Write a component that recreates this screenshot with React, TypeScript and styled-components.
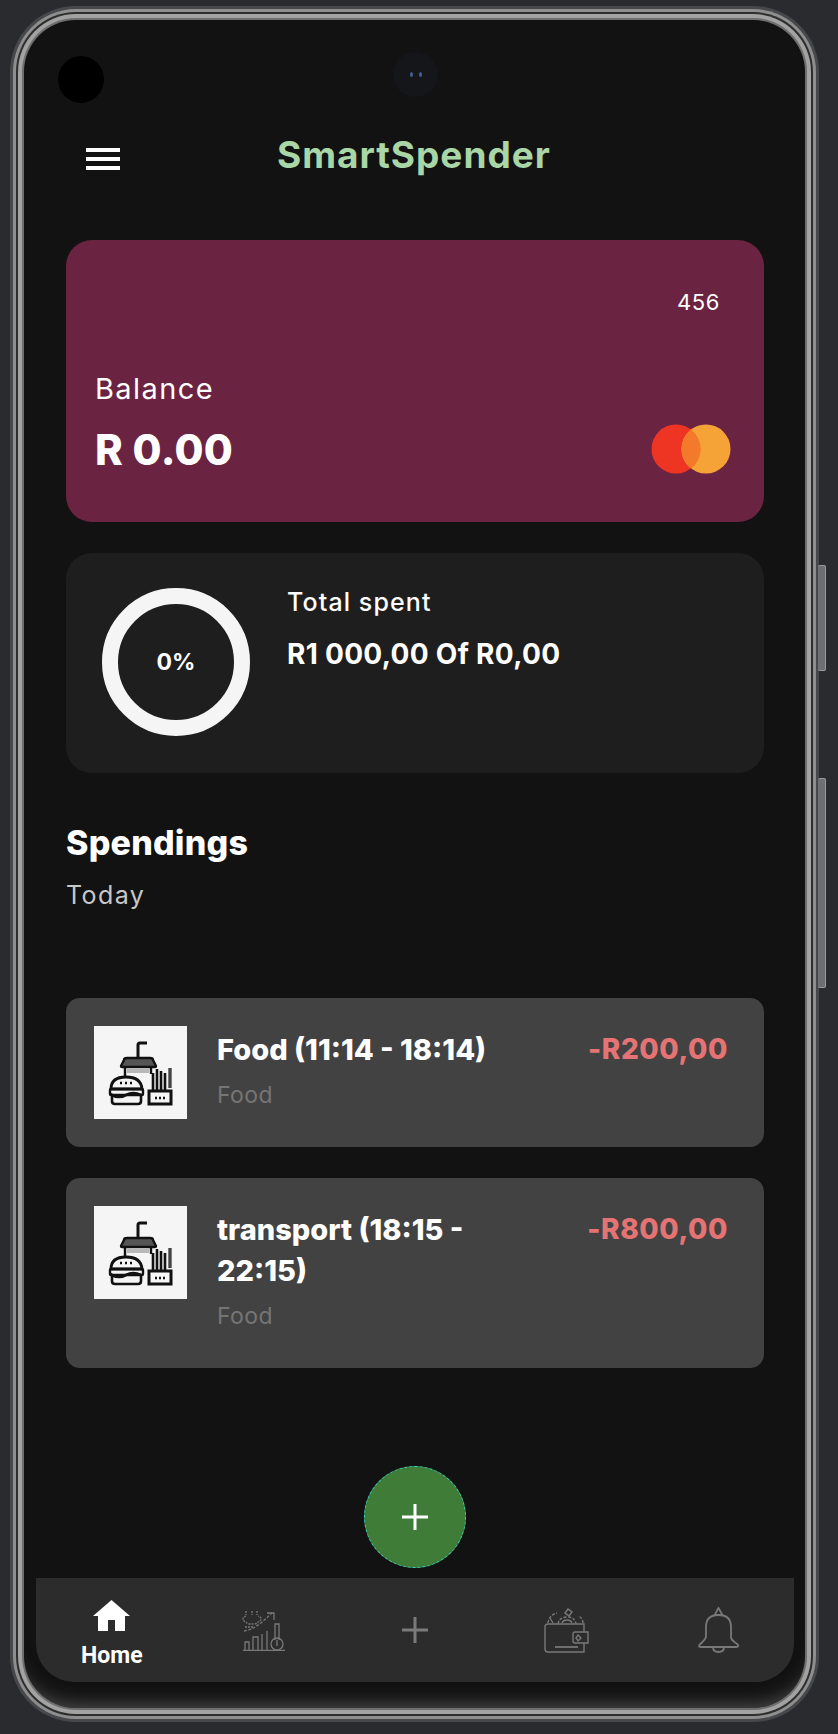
import React from "react";
import styled, { createGlobalStyle } from "styled-components";

const Global = createGlobalStyle`
  html, body { margin: 0; padding: 0; background: #2a2b2e; }
  * { box-sizing: border-box; }
  #root { width: 838px; height: 1734px; overflow: hidden; }
`;

const Page = styled.div`
  width: 838px;
  height: 1734px;
  padding: 20px 33px 26px 24px;
  background: #2a2b2e;
  font-family: Inter, "Noto Sans", sans-serif;
  color: #fff;
`;

const Phone = styled.div`
  position: relative;
  height: 100%;
  border-radius: 52px;
  background: #121212;
  display: flex;
  flex-direction: column;
  box-shadow:
    inset 0 -22px 18px -18px #4a4a4a,
    0 0 0 2px #6e6e6e,
    0 0 0 6px #a2a2a2,
    0 0 0 8px #2e2e2e,
    0 0 0 11px #8e8e8e,
    0 0 0 14px #47484b;
`;

const SideKey = styled.div<{ $top: number; $height: number }>`
  position: absolute;
  right: -21px;
  top: ${(p) => p.$top}px;
  width: 8px;
  height: ${(p) => p.$height}px;
  border-radius: 2px;
  background: #6e6f71;
  border: 1px solid #9a9a9a;
  border-left: none;
`;

const PunchHole = styled.div`
  position: absolute;
  left: 34px;
  top: 36px;
  width: 46px;
  height: 47px;
  border-radius: 50%;
  background: #000;
`;

const FrontCamera = styled.div`
  position: absolute;
  left: 369px;
  top: 32px;
  width: 45px;
  height: 45px;
  border-radius: 50%;
  background: #15161a;
  display: flex;
  align-items: center;
  justify-content: center;
  gap: 6px;
`;

const Lens = styled.span`
  width: 3px;
  height: 5px;
  border-radius: 50%;
  background: #3f5f96;
`;

const Content = styled.main`
  padding: 0 41px 0 42px;
  display: flex;
  flex-direction: column;
`;

const Header = styled.header`
  height: 220px;
  display: flex;
  align-items: flex-start;
  padding-top: 128px;
`;

const MenuBars = styled.div`
  width: 34px;
  height: 22px;
  margin-left: 20px;
  flex: none;
  display: flex;
  flex-direction: column;
  justify-content: space-between;
  span { display: block; height: 4px; background: #fff; }
`;

const Brand = styled.h1`
  margin: -13px 0 0 157px;
  font-size: 37px;
  line-height: 40px;
  font-weight: 700;
  color: #a9d6a6;
  letter-spacing: 1px;
`;

const BalanceCard = styled.section`
  height: 282px;
  border-radius: 26px;
  background: #6b2342;
  padding: 48px 33px 0 29px;
  display: flex;
  flex-direction: column;
`;

const CardNumber = styled.div`
  align-self: flex-end;
  margin-right: 11px;
  font-size: 22px;
  line-height: 28px;
  letter-spacing: 0.6px;
`;

const BalanceLabel = styled.div`
  margin-top: 55px;
  font-size: 29px;
  line-height: 36px;
  letter-spacing: 1.4px;
`;

const BalanceRow = styled.div`
  margin-top: 18px;
  display: flex;
  align-items: center;
  justify-content: space-between;
`;

const BalanceValue = styled.div`
  font-size: 42px;
  line-height: 50px;
  font-weight: 800;
  letter-spacing: 0.3px;
`;

const CardLogo = styled.svg`
  width: 80px;
  height: 50px;
  display: block;
  margin-top: -2px;
`;

const SpentCard = styled.section`
  margin-top: 31px;
  height: 220px;
  border-radius: 26px;
  background: #1e1e1e;
  padding: 35px 36px;
  display: flex;
  gap: 37px;
`;

const Ring = styled.div`
  width: 148px;
  height: 148px;
  flex: none;
  border-radius: 50%;
  border: 16px solid #f5f5f5;
  display: flex;
  align-items: center;
  justify-content: center;
  font-size: 23px;
  font-weight: 700;
`;

const SpentInfo = styled.div`
  display: flex;
  flex-direction: column;
`;

const SpentLabel = styled.div`
  margin-top: -3px;
  font-size: 25px;
  line-height: 34px;
  font-weight: 500;
  letter-spacing: 1.1px;
`;

const SpentValue = styled.div`
  margin-top: 18px;
  font-size: 28px;
  line-height: 34px;
  font-weight: 700;
  letter-spacing: 0.3px;
`;

const SectionTitle = styled.h2`
  margin: 50px 0 0;
  font-size: 34px;
  line-height: 40px;
  font-weight: 800;
  letter-spacing: 0.2px;
`;

const SectionSub = styled.div`
  margin-top: 15px;
  font-size: 25px;
  line-height: 34px;
  color: #c8c8c8;
  letter-spacing: 1.4px;
`;

const List = styled.div`
  margin-top: 86px;
  display: flex;
  flex-direction: column;
  gap: 31px;
`;

const Item = styled.article<{ $height: number }>`
  height: ${(p) => p.$height}px;
  border-radius: 14px;
  background: #424242;
  padding: 28px 36px 0 28px;
  display: flex;
`;

const Thumb = styled.div`
  width: 93px;
  height: 93px;
  flex: none;
  background: #f5f5f5;
  svg { display: block; }
`;

const ItemBody = styled.div`
  width: 290px;
  margin-left: 30px;
`;

const ItemTitle = styled.div`
  font-size: 29px;
  line-height: 41px;
  font-weight: 800;
  margin-top: 3px;
  white-space: pre-line;
`;

const ItemTag = styled.div`
  margin-top: 8px;
  font-size: 23px;
  line-height: 34px;
  color: #757575;
  letter-spacing: 0.4px;
`;

const Amount = styled.div`
  margin-left: auto;
  font-size: 28px;
  line-height: 41px;
  font-weight: 800;
  margin-top: 3px;
  color: #e57373;
  letter-spacing: 0.6px;
`;

const FabSlot = styled.div`
  margin-top: auto;
  margin-bottom: 10px;
  display: flex;
  justify-content: center;
  padding-left: 1px;
`;

const Fab = styled.button`
  width: 102px;
  height: 102px;
  border-radius: 50%;
  background: #3f7c38;
  border: 1px dashed #3fd0c0;
  padding: 0;
  display: flex;
  align-items: center;
  justify-content: center;
`;

const Nav = styled.nav`
  margin: 0 11px 26px 12px;
  height: 104px;
  flex: none;
  background: #2c2c2c;
  border-radius: 0 0 38px 38px;
  display: flex;
`;

const NavItem = styled.div`
  flex: 1;
  display: flex;
  flex-direction: column;
  align-items: center;
  justify-content: center;
  color: #787878;
`;

const ActiveItem = styled(NavItem)`
  color: #fff;
  padding-top: 10px;
`;

const NavLabel = styled.span`
  margin-top: 10px;
  font-family: Roboto, sans-serif;
  font-size: 23px;
  line-height: 30px;
  font-weight: 700;
`;

const Plus = ({ color }: { color: string }) => (
  <svg width="28" height="28" viewBox="0 0 28 28">
    <path d="M14 1v26M1 14h26" stroke={color} strokeWidth="3" />
  </svg>
);

const FoodIcon = () => (
  <svg width="93" height="93" viewBox="0 0 93 93" fill="none" stroke="#111" strokeWidth="2.4">
    <path d="M44 31V19q0-2 2-2h7" strokeWidth="3" />
    <path d="M30 34q0-2 3-2h23q3 0 3 2l3 6q0 1-1 1H28q-1 0-1-1z" fill="#555" />
    <path d="M31 41v10M57 41v7" />
    <path d="M33 45h22" stroke="#b8b8b8" strokeWidth="4" />
    <path d="M17 63q0-12 15-12t16 12z" strokeWidth="2.8" />
    <path d="M16 64q0-1 1-1h31q1 0 1 1v4q0 1-1 1H17q-1 0-1-1z" />
    <path d="M18 69q7 4 14 0t15 0v6q0 3-3 3H21q-3 0-3-3z" strokeWidth="2.6" />
    <path d="M26 57h2M31 57h2M36 57h2" />
    <path d="M55 65h22v13H55z" strokeWidth="3" />
    <path d="M59 65V47M63 65V43M67 65V45M71 65V47" strokeWidth="2.6" />
    <path d="M76 62V42" strokeWidth="3.4" stroke="#444" />
    <path d="M61 72h2M65 72h2M69 72h2" />
  </svg>
);

const StatsIcon = () => (
  <svg width="43" height="41" viewBox="0 0 43 41" fill="none" stroke="currentColor" strokeWidth="1.3">
    <path d="M1 40.500h42" strokeWidth="1.6" />
    <path d="M3 40v-8h4v8M11 40V27h5v13M20 40V24M25 40V21" />
    <path d="M2 21l8-2 9-6 11-10" strokeDasharray="3 1.5" />
    <path d="M25 3h7v7" />
    <path d="M33 30V14h4v16" />
    <circle cx="35" cy="34" r="6" />
    <path d="M35 30v6" />
    <path d="M4 1v4M10 1v4M15 1v4" strokeDasharray="2 1" />
    <path d="M4 6q-3 1-3 3t3 3q1 2 4 2h4q3 0 4-2 3-1 3-3t-3-3" strokeDasharray="2 1" />
    <path d="M3 17h9" strokeDasharray="2 1" />
  </svg>
);

const WalletIcon = () => (
  <svg width="45" height="45" viewBox="0 0 45 45" fill="none" stroke="currentColor" strokeWidth="1.4">
    <path d="M1 19v22q0 3 3 3h36v-9" />
    <path d="M1 19q0-3 3-3h36v8" />
    <path d="M31 24h13v11H31q-2 0-2-2v-7q0-2 2-2z" />
    <path d="M34 27l3 3-3 3-2-3z" />
    <path d="M11 39h23" strokeWidth="1.8" />
    <path d="M4 15q1-8 9-10M14 16q1-7 9-7t9 7M39 15q0-5-5-7" strokeDasharray="3 1.5" />
    <path d="M21 5l3-4 4 3-3 4zM6 10l3 5" />
    <path d="M18 15q1-3 5-3t5 3" />
  </svg>
);

const BellIcon = () => (
  <svg width="41" height="46" viewBox="0 0 41 46" fill="none" stroke="currentColor" strokeWidth="1.8">
    <path d="M20.500 1l4 7h-8z" />
    <path d="M8 30V20q0-12 12.500-12T33 20v10q0 3 4 5.500t3 3.500q0 1-2 1H3q-2 0-2-1t3-3.500 4-5.500z" />
    <path d="M15 40q0 5 5.500 5t5.500-5" />
  </svg>
);

const HomeIcon = () => (
  <svg width="37" height="31" viewBox="0 0 37 31" fill="currentColor">
    <path d="M18.500 0L37 16h-5v15H22V20h-7v11H5V16H0z" />
  </svg>
);

export default function App() {
  return (
    <>
      <Global />
      <Page>
        <Phone>
          <SideKey $top={545} $height={106} />
          <SideKey $top={758} $height={210} />
          <PunchHole />
          <FrontCamera>
            <Lens />
            <Lens />
          </FrontCamera>
          <Content>
            <Header>
              <MenuBars>
                <span />
                <span />
                <span />
              </MenuBars>
              <Brand>SmartSpender</Brand>
            </Header>
            <BalanceCard>
              <CardNumber>456</CardNumber>
              <BalanceLabel>Balance</BalanceLabel>
              <BalanceRow>
                <BalanceValue>R 0.00</BalanceValue>
                <CardLogo viewBox="0 0 80 50">
                  <circle cx="25" cy="25" r="24.500" fill="#ee3524" />
                  <circle cx="55" cy="25" r="24.500" fill="#f5a337" />
                  <path d="M40 5.500a24.500 24.500 0 0 1 0 39a24.500 24.500 0 0 1 0-39z" fill="#f47a2b" />
                </CardLogo>
              </BalanceRow>
            </BalanceCard>
            <SpentCard>
              <Ring>0%</Ring>
              <SpentInfo>
                <SpentLabel>Total spent</SpentLabel>
                <SpentValue>R1 000,00 Of R0,00</SpentValue>
              </SpentInfo>
            </SpentCard>
            <SectionTitle>Spendings</SectionTitle>
            <SectionSub>Today</SectionSub>
            <List>
              <Item $height={149}>
                <Thumb>
                  <FoodIcon />
                </Thumb>
                <ItemBody>
                  <ItemTitle>Food (11:14 - 18:14)</ItemTitle>
                  <ItemTag>Food</ItemTag>
                </ItemBody>
                <Amount>-R200,00</Amount>
              </Item>
              <Item $height={190}>
                <Thumb>
                  <FoodIcon />
                </Thumb>
                <ItemBody>
                  <ItemTitle>{"transport (18:15 -\n22:15)"}</ItemTitle>
                  <ItemTag>Food</ItemTag>
                </ItemBody>
                <Amount>-R800,00</Amount>
              </Item>
            </List>
          </Content>
          <FabSlot>
            <Fab aria-label="Add">
              <Plus color="#fff" />
            </Fab>
          </FabSlot>
          <Nav>
            <ActiveItem>
              <HomeIcon />
              <NavLabel>Home</NavLabel>
            </ActiveItem>
            <NavItem>
              <StatsIcon />
            </NavItem>
            <NavItem>
              <Plus color="#7a7a7a" />
            </NavItem>
            <NavItem>
              <WalletIcon />
            </NavItem>
            <NavItem>
              <BellIcon />
            </NavItem>
          </Nav>
        </Phone>
      </Page>
    </>
  );
}
